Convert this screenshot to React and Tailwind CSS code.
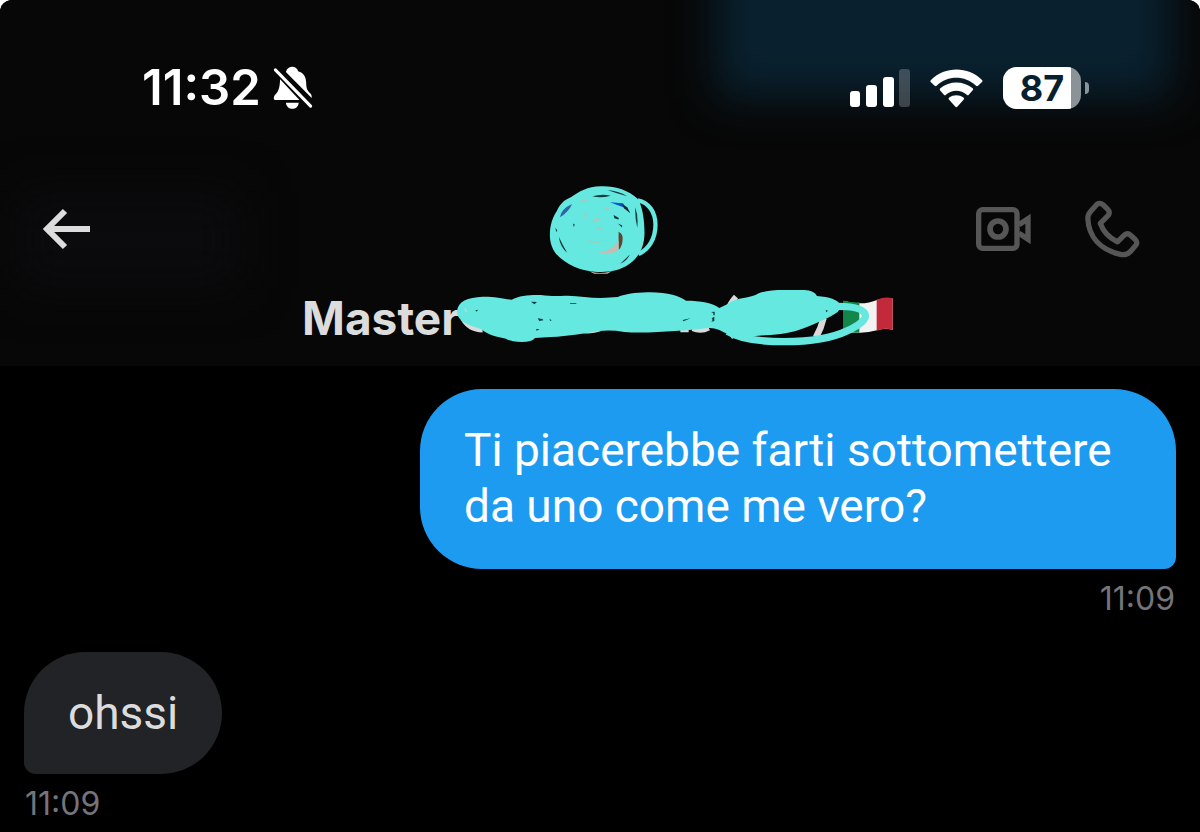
import React from 'react';

const messages = [
  { id: 1, text: 'Ti piacerebbe farti sottomettere da uno come me vero?', time: '11:09', mine: true },
  { id: 2, text: 'ohssi', time: '11:09', mine: false },
];

const BellOffIcon = () => (
  <svg viewBox="429 52 118 129" className="w-10 h-11" fill="#fff" aria-hidden="true">
    <path d="M467 69C470 59 478 54 486 54s15 5 17 13c16 4 24 17 24 36 0 15 4 22 12 29 3 3 5 8 4 14L467 69Z" />
    <path d="M450 91l57 61H438c-6 0-8-4-6-10 1-4 4-6 8-11 7-8 9-20 10-40Z" />
    <path d="M467 160h38c-1 11-9 18-19 18s-18-7-19-18Z" />
    <path d="M436 63l104 107" stroke="#fff" strokeWidth="9" strokeLinecap="round" />
  </svg>
);

const SignalIcon = () => (
  <svg viewBox="0 0 60 38" className="w-15 h-[38px]" fill="#fff" aria-hidden="true">
    <rect x="0" y="22" width="10" height="16" rx="3" />
    <rect x="16" y="16" width="11" height="22" rx="3" />
    <rect x="33" y="8" width="11" height="30" rx="3" />
    <rect x="49" y="0" width="11" height="38" rx="3" fillOpacity="0.22" />
  </svg>
);

const WifiIcon = () => (
  <svg viewBox="274 52 160 117" className="w-[53px] h-[39px]" fill="#fff" aria-hidden="true">
    <path d="M276 91Q274 88 277 85C320 43 388 43 431 85Q434 88 431 91L419 102Q416 105 413 102C378 70 328 70 294 102Q291 105 288 102Z" />
    <path d="M304 116Q302 113 305 110C333 87 374 87 403 110Q406 113 403 116L391 129Q388 132 385 129C366 113 341 113 322 129Q319 132 316 129Z" />
    <path d="M331 144Q328 141 332 138C345 129 362 129 375 138Q379 141 376 144L357 165Q353 169 350 165Z" />
  </svg>
);

const Battery = ({ level }) => (
  <div className="flex items-center gap-1">
    <div className="relative flex h-[42px] w-[78px] items-center justify-center overflow-hidden rounded-[14px] bg-[#8b9298]">
      <div className="absolute inset-y-0 left-0 bg-white" style={{ width: `${level}%` }} />
      <span className="relative text-[36px] leading-none font-bold text-[#08202d]">{level}</span>
    </div>
    <div className="h-3 w-1 rounded-r-full bg-[#8b9298]" />
  </div>
);

const BackIcon = () => (
  <svg viewBox="0 0 48 42" className="w-12 h-[42px]" fill="none" stroke="#dcdcdc" strokeWidth="6" aria-hidden="true">
    <path d="M23 3L5 21l18 18M5 21h43" />
  </svg>
);

const VideoIcon = () => (
  <svg viewBox="49 66 165 132" className="w-[55px] h-11" fill="none" stroke="#565656" strokeWidth="16" aria-hidden="true">
    <rect x="57" y="74" width="115" height="116" rx="12" />
    <circle cx="115" cy="132" r="24" strokeWidth="17" />
    <path d="M178 119l27-18v62l-27-18" />
  </svg>
);

const PhoneIcon = () => (
  <svg viewBox="375 40 166 176" className="w-[55px] h-[58px]" fill="none" stroke="#565656" strokeWidth="16" strokeLinejoin="round" aria-hidden="true">
    <path d="M411 53q9-6 18 1l14 14q9 9 2 19l-24 24c9 25 25 43 52 56l20-20q11-9 20 0l14 13q8 9 2 17l-17 20q-12 12-30 8C420 191 386 152 383 96q0-12 9-22Z" />
  </svg>
);

const Avatar = () => (
  <svg viewBox="55 40 327 268" className="w-[109px] h-[89px]" aria-hidden="true">
    <path d="M175 299q32 12 70 0l-15 8h-40Z" fill="#c8b4a5" />
    <path d="M57 190C57 160 66 135 78 118C88 98 98 86 120 77C145 60 170 45 210 44C250 42 292 54 322 82C336 105 342 145 342 185C341 225 328 255 295 279C265 300 225 305 190 301C150 298 105 280 76 248C62 230 57 210 57 190Z" fill="#64e8e0" />
    <path d="M322 86c34 6 53 38 53 74 0 42-20 74-51 88" fill="none" stroke="#64e8e0" strokeWidth="13" />
    <path d="M185 74q28-8 55-2-29 9-55 2ZM230 55q33 2 60 19-30-8-60-19ZM314 107q10 26 6 62-7-32-6-62ZM84 196q12 26 25 48-21-17-25-48ZM269 277l29-28q-8 19-29 28ZM249 130l16 9-2 5-12-4ZM262 156l13 6-1 6ZM74 169l5 7-3 6ZM127 156l5 3-3 8Z" fill="#143b40" />
    <path d="M87 137q5-26 37-40-11 25-37 40Z" fill="#3262a5" />
    <path d="M238 92l39 3 21 27-18-14Z" fill="#0754c9" />
    <path d="M274 98l16 9 9 18-18-14Z" fill="#142b35" />
    <path d="M264 181q13 6 12 22 0 20-12 33Z" fill="#63412c" />
    <path d="M264 207v29q-14 12-62 9 42-7 62-38Z" fill="#c8bbb0" />
    <path d="M168 203q25 11 58 5-34 14-58-5ZM178 152l17-11q11-4 15 1-10 10-32 10ZM194 168l21 1-7 8ZM146 88q15-6 30 1-16 0-30-1ZM154 130l14-5-3 12ZM149 188l7 3-4 7ZM222 110l16-2-7 7ZM330 207l5 18-4 5Z" fill="#acc8ba" />
  </svg>
);

// marker strokes drawn over the rest of the display name, plus the flag
const NameScribble = () => (
  <svg viewBox="495 30 1314 180" className="-ml-1 w-[438px] h-[60px] shrink-0" aria-hidden="true">
    <path d="M1658 68q55 17 102-3 24-8 45-4v95q-22-8-47 1-50 14-100 4Z" fill="#f2f2f2" />
    <path d="M1658 68q22 6 47 5v91q-25 1-47-3Z" fill="#13864a" />
    <path d="M1757 65q26-10 48-4v95q-23-8-48 2Z" fill="#c22a3c" />
    <g fill="none" stroke="#d9d9d9" strokeWidth="17">
      <path d="M1335 56q-17 18-27 45M1313 140q5 20 17 38" />
      <path d="M517 122q18 32 58 33M1168 154h25M1205 151q25 10 48-2M865 155q34 7 61-3" />
    </g>
    <path d="M1588 120q-7 27-22 54l20 4q13-24 21-56Z" fill="#d9d9d9" />
    <path d="M498 100C500 70 530 58 575 56C605 55 640 62 662 65C685 52 720 50 750 51C780 55 800 54 830 53C865 54 895 60 930 60L980 57C1005 48 1030 44 1070 43C1130 42 1165 54 1185 68C1230 68 1265 74 1285 90L1310 78Q1325 66 1345 62C1370 58 1385 54 1395 50C1410 40 1440 36 1480 36L1540 36Q1570 37 1578 54C1615 57 1640 65 1648 80Q1650 92 1640 102C1615 120 1570 138 1540 150C1500 165 1470 170 1420 172Q1350 180 1325 172Q1305 168 1285 156Q1265 148 1245 151Q1180 159 1100 162Q1040 165 1000 162Q960 155 925 159C890 165 830 175 780 177L732 180Q724 192 692 192Q655 190 645 182C620 178 588 170 572 154Q530 140 515 131Q498 118 498 100Z" fill="#64e8e0" />
    <path d="M1310 160C1350 185 1410 191 1480 191C1560 191 1620 182 1670 158C1705 142 1725 124 1723 112C1720 93 1690 85 1640 85" fill="none" stroke="#64e8e0" strokeWidth="22" />
    <path d="M720 71l18 1-8 7ZM740 121l14 2 3 4-12 2ZM776 123l6 4-5 2ZM735 153l11 1-9 4ZM1175 126l24-5-22 9ZM1260 102l11-1v11h-4v-7ZM1262 121l8-5v13l-9 2 4-5ZM1604 96l7 2-5 5ZM836 76h20v2h-18ZM553 97l8-2-4 6Z" fill="#073a3e" />
    <path d="M521 90q6 2 7 14-8-1-7-14Z" fill="#b9dcda" />
  </svg>
);

const Message = ({ text, time, mine }) => (
  <li className={`flex flex-col ${mine ? 'items-end' : 'items-start'}`}>
    <p
      className={`max-w-[756px] px-11 font-['Roboto',sans-serif] text-[46px] leading-[56px] ${
        mine
          ? 'rounded-[62px] rounded-br-[12px] bg-[#1d9bf0] pt-[33px] pb-[35px] text-white'
          : 'rounded-[62px] rounded-bl-[12px] bg-[#222327] py-[33px] text-[#dcdcdc]'
      }`}
    >
      {text}
    </p>
    <time className="mt-2 px-px text-[32px] leading-[44px] text-[#74747a]">{time}</time>
  </li>
);

const App = () => {
  return (
    <div className="bg-white font-['Inter',sans-serif]">
      <div className="relative min-h-screen overflow-hidden rounded-t-xl bg-black">
        <header className="relative overflow-hidden bg-[#070707] pb-4">
          <div className="absolute -top-12 right-7 h-[146px] w-[456px] bg-[#09212f] blur-[22px]" />
          <div className="absolute top-48 left-4 h-24 w-56 bg-[#0b0b0e] blur-xl" />

          {/* Status bar */}
          <div className="relative flex h-[176px] items-center justify-between pr-[111px] pl-[142px]">
            <div className="flex items-center gap-3 text-[49px] font-semibold text-white">
              <span>11:32</span>
              <BellOffIcon />
            </div>
            <div className="flex items-center gap-5">
              <SignalIcon />
              <WifiIcon />
              <Battery level={87} />
            </div>
          </div>

          {/* Conversation bar */}
          <div className="relative grid h-[106px] grid-cols-[1fr_auto_1fr] items-center pr-9 pl-[42px]">
            <button type="button" aria-label="Back" className="justify-self-start">
              <BackIcon />
            </button>
            <Avatar />
            <div className="flex items-center gap-[54px] justify-self-end pr-6">
              <button type="button" aria-label="Video call">
                <VideoIcon />
              </button>
              <button type="button" aria-label="Call">
                <PhoneIcon />
              </button>
            </div>
          </div>
          <h1 className="relative flex h-[68px] items-center justify-center pt-1 pr-1 text-[46px] font-bold text-[#dcdcdc]">
            <span>Master</span>
            <NameScribble />
          </h1>
        </header>

        <main className="px-6 pt-[23px]">
          <ul className="space-y-[31px]">
            {messages.map((message) => (
              <Message key={message.id} {...message} />
            ))}
          </ul>
        </main>
      </div>
    </div>
  );
};

export default App;
